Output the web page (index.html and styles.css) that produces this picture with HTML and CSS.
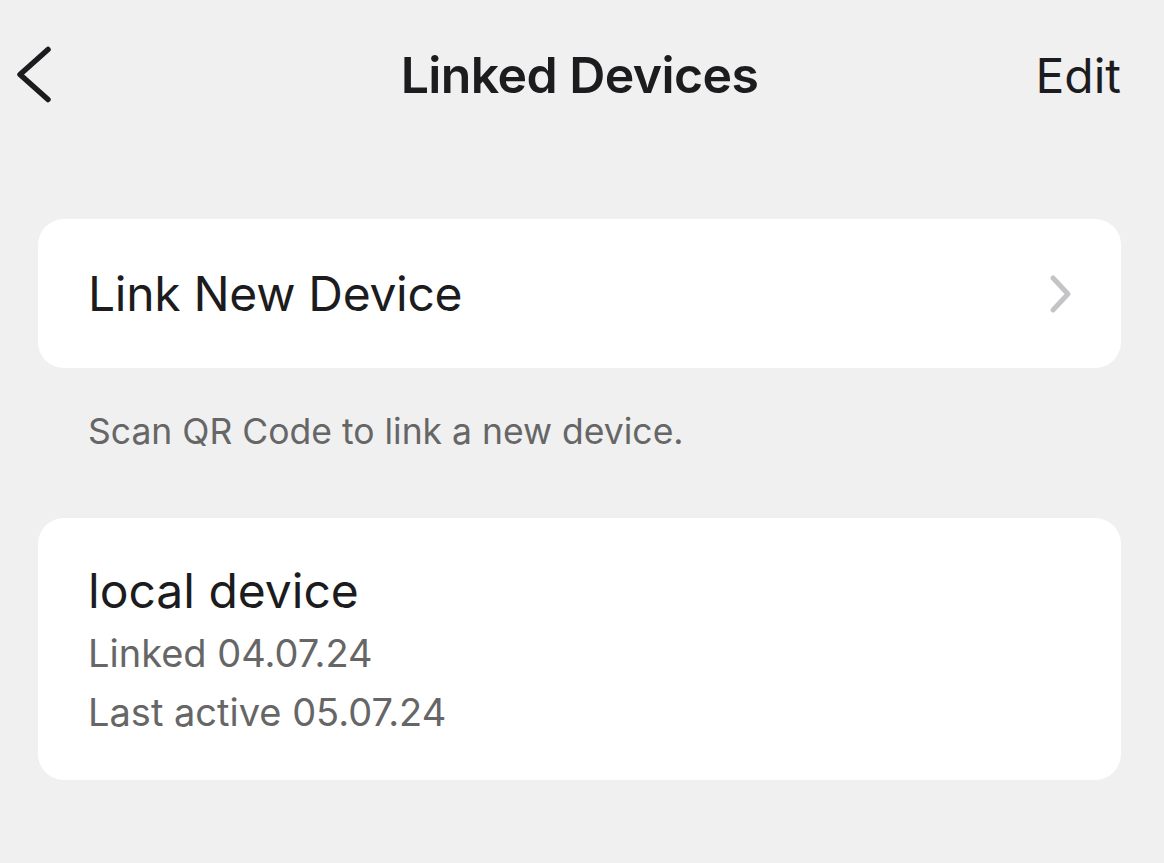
FILE: index.html
```html
<!DOCTYPE html>
<html lang="en">
<head>
    <meta charset="UTF-8">
    <title>Linked Devices</title>
    <link rel="stylesheet" href="styles.css">
</head>
<body>
    <div class="screen">
        <header class="nav">
            <button class="back" aria-label="Back">
                <svg width="40" height="60" viewBox="0 0 40 60">
                    <path d="M34 4.5 L6 29.5 L34 54.5" fill="none" stroke="#1c1c1e" stroke-width="5.5" stroke-linecap="round" stroke-linejoin="round"/>
                </svg>
            </button>
            <h1 class="title">Linked Devices</h1>
            <button class="edit">Edit</button>
        </header>

        <div class="card link-row">
            <span class="row-label">Link New Device</span>
            <svg class="chevron" width="24" height="40" viewBox="0 0 24 40">
                <path d="M4 4 L19 20 L4 36" fill="none" stroke="#c4c4c6" stroke-width="5" stroke-linecap="round" stroke-linejoin="round"/>
            </svg>
        </div>
        <p class="hint">Scan QR Code to link a new device.</p>

        <div class="card device">
            <div class="device-name">local device</div>
            <div class="device-meta">Linked 04.07.24</div>
            <div class="device-meta">Last active 05.07.24</div>
        </div>
    </div>
</body>
</html>
```

FILE: styles.css
```css
body {
    margin: 0;
    background-color: #f0f0f0;
    font-family: Inter, "Noto Sans", sans-serif;
    color: #1c1c1e;
}

.screen {
    padding: 0 43px 0 38px;
}

.nav {
    display: grid;
    grid-template-columns: 1fr auto 1fr;
    align-items: center;
    height: 150px;
}

.back,
.edit {
    background: none;
    border: none;
    padding: 0;
    cursor: pointer;
    font-family: inherit;
    color: #1c1c1e;
}

.back {
    justify-self: start;
    margin-left: -24px;
    display: flex;
}

.title {
    margin: 0;
    font-size: 50px;
    font-weight: 600;
    letter-spacing: -0.6px;
}

.edit {
    justify-self: end;
    font-size: 48px;
    font-weight: 400;
    margin-right: 0;
}

.card {
    background-color: #ffffff;
    border-radius: 26px;
}

.link-row {
    margin-top: 69px;
    height: 149px;
    display: flex;
    align-items: center;
    justify-content: space-between;
    padding: 0 48px 0 50px;
    box-sizing: border-box;
}

.row-label {
    font-size: 48px;
    letter-spacing: -0.3px;
}

.hint {
    margin: 0;
    padding: 42px 0 0 50px;
    height: 108px;
    box-sizing: border-box;
    font-size: 35.5px;
    color: #666666;
}

.device {
    margin-top: 42px;
    padding: 40px 50px 40px;
    height: 262px;
    box-sizing: border-box;
}

.device-name {
    font-size: 48px;
    line-height: 66px;
}

.device-meta {
    font-size: 38px;
    line-height: 59px;
    color: #666666;
}
```
